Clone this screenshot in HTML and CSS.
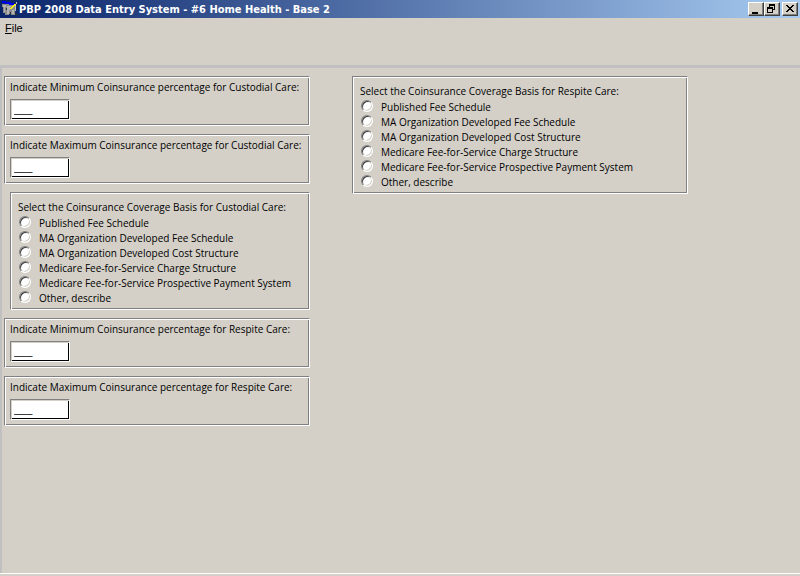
FILE: index.html
```html
<!DOCTYPE html>
<html lang="en">
<head>
<meta charset="utf-8">
<title>PBP 2008 Data Entry System - #6 Home Health - Base 2</title>
<link rel="stylesheet" href="styles.css">
</head>
<body>
<header class="titlebar">
  <svg class="app-icon" width="16" height="16" viewBox="0 0 16 16" shape-rendering="crispEdges" aria-hidden="true">
    <path fill="#8c8c8c" d="M0 3h13v9h1v2H9v-1H7v1H3v-2H1V6H0z"/>
    <path fill="#b4b4b4" d="M1 4h3v2H3v5H2V6H1zM5 5h4v1H8v3H7v4H5zM10 9h2v4h-2z"/>
    <path fill="#0000f0" d="M0 0h4v1h5v1h3v2H7V3H3V2H0z"/>
    <path fill="#c0c0c0" d="M13 3h1v7h-1zM14 1h1v2h-1z"/>
    <path fill="#ffff00" d="M12 3h2v1h-1v1h-1v1h-1v1h-1v1H8V7h1V6h1V5h1V4h1z"/>
    <path fill="#303030" d="M4 7h1v2H4zM8 11h1v2H8zM13 12h1v1h2v1h-3z"/>
  </svg>
  <h1 class="title">PBP 2008 Data Entry System - #6 Home Health - Base 2</h1>
  <div class="window-buttons">
    <button class="window-button" type="button" aria-label="Minimize"><svg width="12" height="10" viewBox="0 0 12 10" shape-rendering="crispEdges"><path d="M2 8h6v2H2z"/></svg></button>
    <button class="window-button" type="button" aria-label="Restore"><svg width="12" height="10" viewBox="0 0 12 10" shape-rendering="crispEdges"><path fill-rule="evenodd" d="M3 0h6v6H7V5h1V2H4v1H3zM1 3h6v6H1zM2 5v3h4V5z"/></svg></button>
    <button class="window-button close" type="button" aria-label="Close"><svg width="12" height="10" viewBox="0 0 12 10" shape-rendering="crispEdges"><path d="M2 1h2v1h1v1h2V2h1V1h2v1H9v1H8v1H7v1h1v1h1v1h1v1H8V7H7V6H5v1H4v1H2V7h1V6h1V5h1V4H4V3H3V2H2z"/></svg></button>
  </div>
</header>
<nav class="menubar"><button class="menu-item" type="button"><u>F</u>ile</button></nav>
<main class="workspace">
  <form class="form">
    <div class="column">
      <div class="panel field">
        <label for="min-custodial">Indicate Minimum Coinsurance percentage for Custodial Care:</label>
        <input class="percent" id="min-custodial" type="text" value="___">
      </div>
      <div class="panel field">
        <label for="max-custodial">Indicate Maximum Coinsurance percentage for Custodial Care:</label>
        <input class="percent" id="max-custodial" type="text" value="___">
      </div>
      <div class="panel choices inset" role="radiogroup" aria-labelledby="custodial-basis">
        <div class="caption" id="custodial-basis">Select the Coinsurance Coverage Basis for Custodial Care:</div>
        <label class="choice"><input type="radio" name="custodial">Published Fee Schedule</label>
        <label class="choice"><input type="radio" name="custodial">MA Organization Developed Fee Schedule</label>
        <label class="choice"><input type="radio" name="custodial">MA Organization Developed Cost Structure</label>
        <label class="choice"><input type="radio" name="custodial">Medicare Fee-for-Service Charge Structure</label>
        <label class="choice"><input type="radio" name="custodial">Medicare Fee-for-Service Prospective Payment System</label>
        <label class="choice"><input type="radio" name="custodial">Other, describe</label>
      </div>
      <div class="panel field">
        <label for="min-respite">Indicate Minimum Coinsurance percentage for Respite Care:</label>
        <input class="percent" id="min-respite" type="text" value="___">
      </div>
      <div class="panel field">
        <label for="max-respite">Indicate Maximum Coinsurance percentage for Respite Care:</label>
        <input class="percent" id="max-respite" type="text" value="___">
      </div>
    </div>
    <div class="column wide">
      <div class="panel choices" role="radiogroup" aria-labelledby="respite-basis">
        <div class="caption" id="respite-basis">Select the Coinsurance Coverage Basis for Respite Care:</div>
        <label class="choice"><input type="radio" name="respite">Published Fee Schedule</label>
        <label class="choice"><input type="radio" name="respite">MA Organization Developed Fee Schedule</label>
        <label class="choice"><input type="radio" name="respite">MA Organization Developed Cost Structure</label>
        <label class="choice"><input type="radio" name="respite">Medicare Fee-for-Service Charge Structure</label>
        <label class="choice"><input type="radio" name="respite">Medicare Fee-for-Service Prospective Payment System</label>
        <label class="choice"><input type="radio" name="respite">Other, describe</label>
      </div>
    </div>
  </form>
</main>
<footer class="statusbar"></footer>
</body>
</html>
```
FILE: styles.css
```css
* {
  box-sizing: border-box;
}

body {
  margin: 0;
  min-height: 100vh;
  display: flex;
  flex-direction: column;
  background: #d4d0c8;
  color: #000;
  font: 10px/14px "Open Sans", "Liberation Sans", sans-serif;
  white-space: nowrap;
}

button,
input {
  margin: 0;
  color: inherit;
  font: inherit;
}

.titlebar {
  display: flex;
  align-items: center;
  height: 18px;
  padding: 0 2px;
  background: linear-gradient(to right, #0a246a, #a6caf0);
}

.app-icon {
  flex: none;
}

.title {
  flex: 1;
  margin: 0 0 0 1px;
  padding-top: 2px;
  color: #fff;
  font: bold 11px/16px "DejaVu Sans Condensed", Tahoma, sans-serif;
}

.window-buttons {
  display: flex;
}

.window-button {
  width: 16px;
  height: 14px;
  padding: 1px;
  border: 1px solid;
  border-color: #fff #404040 #404040 #fff;
  background: #d4d0c8;
  box-shadow: inset -1px -1px #808080;
}

.window-button svg {
  display: block;
}

.close {
  margin-left: 2px;
}

.menubar {
  height: 47px;
  padding: 3px 5px;
}

.menu-item {
  padding: 0;
  border: 0;
  background: none;
  font: 11px/14px "Liberation Sans", Arial, sans-serif;
}

.workspace {
  flex: 1;
  border: solid #c0c0c0;
  border-width: 3px 0 0 2px;
}

.form {
  display: flex;
  gap: 42px;
  padding: 8px 2px;
}

.column {
  display: flex;
  flex-direction: column;
  flex: 0 1 306px;
  gap: 8px;
  min-width: 0;
}

.wide {
  flex-basis: 336px;
}

.panel {
  border: 1px solid;
  border-color: #808080 #fff #fff #808080;
  box-shadow: inset 1px 1px #fff, inset -1px -1px #808080;
}

.field {
  display: flex;
  flex-direction: column;
  align-items: flex-start;
  gap: 5px;
  height: 50px;
  padding: 3px 5px;
}

.percent {
  width: 60px;
  height: 21px;
  padding: 0 3px 2px;
  border: 1px solid;
  border-color: #808080 #fff #fff #808080;
  border-radius: 0;
  background: #fff;
  box-shadow: inset 1px 1px #d4d0c8, inset -1px -1px #000;
  font: 11px/14px "Liberation Sans", Arial, sans-serif;
}

.choices {
  padding: 7px 4px 3px 7px;
}

.inset {
  margin-left: 6px;
}

.caption {
  height: 16px;
}

.choice {
  display: flex;
  gap: 8px;
  height: 15px;
}

.choice input {
  appearance: none;
  flex: none;
  width: 12px;
  height: 12px;
  margin-left: 1px;
  border: 1px solid;
  border-color: #808080 #fff #fff #808080;
  border-radius: 50%;
  background: #fff;
  box-shadow: inset 1px 1px #404040, inset -1px -1px #d4d0c8;
}

.statusbar {
  height: 3px;
  border-top: 1px solid #fff;
}
```
